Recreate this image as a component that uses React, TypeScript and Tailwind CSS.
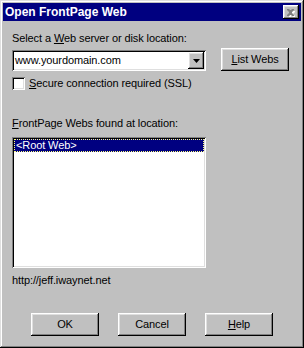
import React from 'react';

const raised =
	'shadow-[inset_-1px_-1px_#000,inset_1px_1px_#fff,inset_-2px_-2px_#808080,inset_2px_2px_#dfdfdf]';
const sunken =
	'shadow-[inset_1px_1px_#808080,inset_-1px_-1px_#fff,inset_2px_2px_#000,inset_-2px_-2px_#dfdfdf]';

const Btn: React.FC<{ children: React.ReactNode; className?: string }> = (props) => {
	return (
		<button
			className={`h-[23px] w-[68px] bg-[#c0c0c0] text-black flex items-center justify-center ${raised} ${props.className ?? ''}`}
		>
			{props.children}
		</button>
	);
};

export default function App() {
	return (
		<div className="w-[304px] h-[348px] bg-[#c0c0c0] p-[3px] flex flex-col text-[11px] leading-[13px] tracking-[-0.1px] text-black font-['Liberation_Sans',Arial,sans-serif] shadow-[inset_-1px_-1px_#000,inset_1px_1px_#dfdfdf,inset_-2px_-2px_#808080,inset_2px_2px_#fff]">
			{/* title bar */}
			<div className="h-[18px] bg-[#000080] flex items-center justify-between pl-[2px] pr-[2px]">
				<span className="text-white font-bold text-[12px] tracking-normal">Open FrontPage Web</span>
				<div className={`w-[16px] h-[14px] bg-[#c0c0c0] flex items-center justify-center ${raised}`}>
					<svg width="8" height="7" viewBox="0 0 8 7" className="overflow-visible">
						<path d="M1 1h2l1 1 1-1h2v1l-2 2 2 2v1H5L4 6 3 7H1V6l2-2-2-2z" fill="#fff" transform="translate(1 1)" />
						<path d="M0 0h2l1 1h1l1-1h2v1L5 3v1l2 2v1H5L4 6H3L2 7H0V6l2-2V3L0 1z" fill="#808080" />
					</svg>
				</div>
			</div>

			<div className="flex flex-col px-[9px]">
				<div className="mt-[11px]">
					Select a <span className="underline">W</span>eb server or disk location:
				</div>

				<div className="mt-[3px] flex items-start justify-between pr-[3px]">
					<div className={`mt-[2px] w-[194px] h-[21px] bg-white p-[2px] flex items-center ${sunken}`}>
						<span className="flex-1 pl-[1px]">www.yourdomain.com</span>
						<div className={`w-[16px] h-[17px] bg-[#c0c0c0] flex items-center justify-center ${raised}`}>
							<svg width="7" height="4" viewBox="0 0 7 4">
								<path d="M0 0h7L3.5 4z" fill="#000" />
							</svg>
						</div>
					</div>
					<Btn className="w-[67px]">
						<span>
							<span className="underline">L</span>ist Webs
						</span>
					</Btn>
				</div>

				<div className="mt-[6px] flex items-center">
					<div className={`w-[13px] h-[13px] bg-white ${sunken}`} />
					<span className="ml-[4px]">
						<span className="underline">S</span>ecure connection required (SSL)
					</span>
				</div>

				<div className="mt-[27px]">
					<span className="underline">F</span>rontPage Webs found at location:
				</div>

				<div className={`mt-[7px] w-[194px] h-[131px] bg-white p-[2px] ${sunken}`}>
					<div className="h-[13px] bg-[#000080] text-white pl-[2px] outline-1 outline-dotted outline-[#ffff80] -outline-offset-1">
						&lt;Root Web&gt;
					</div>
				</div>

				<div className="mt-[6px]">http://jeff.iwaynet.net</div>
			</div>

			<div className="mt-[26px] flex justify-center gap-[19px]">
				<Btn>OK</Btn>
				<Btn>Cancel</Btn>
				<Btn>
					<span>
						<span className="underline">H</span>elp
					</span>
				</Btn>
			</div>
		</div>
	);
}
